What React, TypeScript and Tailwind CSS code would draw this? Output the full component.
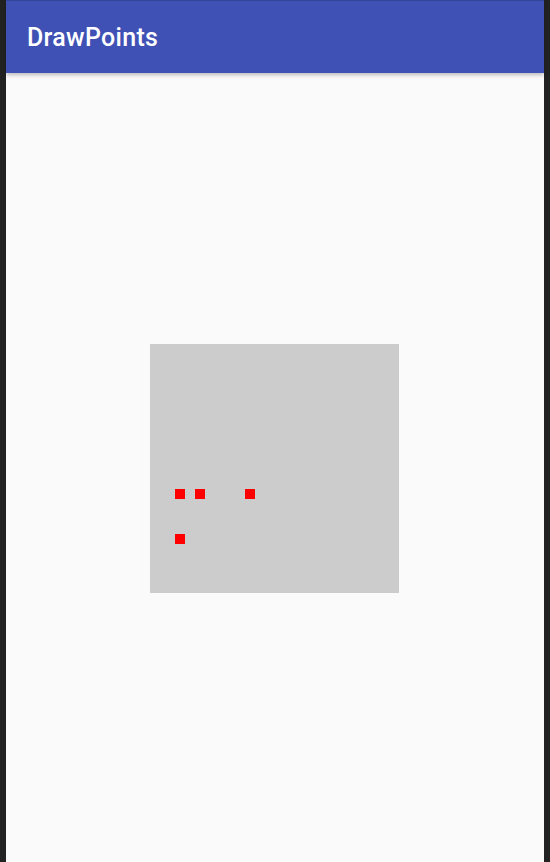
import React from "react";

const points = [
  { x: 25, y: 145 },
  { x: 45, y: 145 },
  { x: 95, y: 145 },
  { x: 25, y: 190 },
];

export default function App() {
  return (
    <div className="flex h-[862px] w-[550px] bg-[#222222]">
      <div className="ml-[6px] mr-[6px] flex flex-1 flex-col bg-[#fafafa]">
        <div className="relative z-10 flex h-[73px] shrink-0 items-center border-t border-[#34449a] bg-[#3f51b5] pl-[21px] pt-[1px] shadow-[0_2px_4px_rgba(0,0,0,0.25)]">
          <span
            className="text-[25px] font-medium leading-none tracking-[0.3px] text-white"
            style={{ fontFamily: "Roboto, 'Noto Sans', sans-serif" }}
          >
            DrawPoints
          </span>
        </div>
        <div className="flex flex-1 justify-center pt-[271px]">
          <div className="relative ml-[-1px] h-[249px] w-[249px] bg-[#cccccc]">
            {points.map((p, i) => (
              <div
                key={i}
                className="absolute h-[10px] w-[10px] bg-[#ff0000]"
                style={{ left: p.x, top: p.y }}
              />
            ))}
          </div>
        </div>
      </div>
    </div>
  );
}
